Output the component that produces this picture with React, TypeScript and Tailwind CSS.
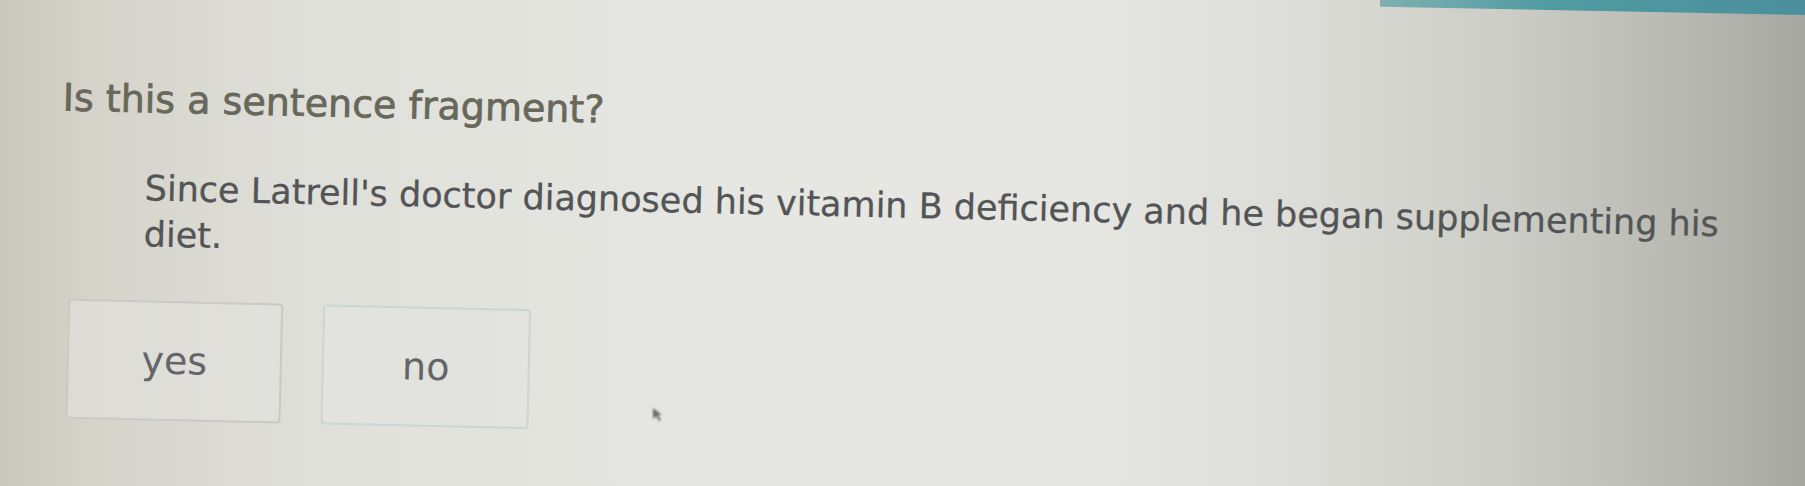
import React from 'react';

const choices = [
  { label: 'yes', width: 'w-[215px]', border: 'border-[#c9cac5]' },
  { label: 'no', width: 'w-[208px]', border: 'border-[#c9d6d3]' },
];

export default function App() {
  return (
    <div
      className="relative w-[1805px] h-[486px] overflow-hidden bg-[linear-gradient(90deg,#cac7bd_0%,#d5d3ca_5%,#e0e0db_18%,#e6e6e2_40%,#e6e6e3_60%,#dcddd8_72%,#cbccc5_84%,#b6b7af_94%,#a6a7a0_100%)]"
      style={{ fontFamily: '"DejaVu Sans", Verdana, sans-serif' }}
    >
      {/* monitor edge strip */}
      <div className="flex justify-end">
        <div className="w-[425px] h-[15px] bg-[linear-gradient(90deg,#7fb0b0,#4f9ba3_40%,#4c8f9c)] [clip-path:polygon(0_0,100%_0,100%_100%,0_45%)]" />
      </div>

      <div className="absolute inset-0 origin-top-left rotate-[1.3deg] pl-[65px] pt-[74px]">
        <h1 className="text-[38px] leading-[44px] text-[#67675a] [-webkit-text-stroke:0.7px_#67675a]">
          Is this a sentence fragment?
        </h1>

        <p className="mt-[44px] ml-[84px] w-[1610px] text-[35px] leading-[46px] text-[#535456] [-webkit-text-stroke:0.3px_#535456]">
          Since Latrell's doctor diagnosed his vitamin B deficiency and he began supplementing his diet.
        </p>

        <div className="mt-[43px] ml-[10px] flex gap-[40px]">
          {choices.map((c) => (
            <button
              key={c.label}
              className={`${c.width} ${c.border} h-[120px] flex items-center justify-center rounded-[4px] border-2 bg-[#e3e3df]/60 text-[38px] text-[#646568]`}
            >
              {c.label}
            </button>
          ))}
        </div>
      </div>

      {/* mouse pointer */}
      <svg className="absolute left-[652px] top-[407px] w-[13px] h-[15px] blur-[1px]" viewBox="0 0 13 15">
        <path d="M1 1 L1 12 L4 9 L7 14 L9 13 L6 8 L10 8 Z" fill="#6b6b6b" />
      </svg>
    </div>
  );
}
